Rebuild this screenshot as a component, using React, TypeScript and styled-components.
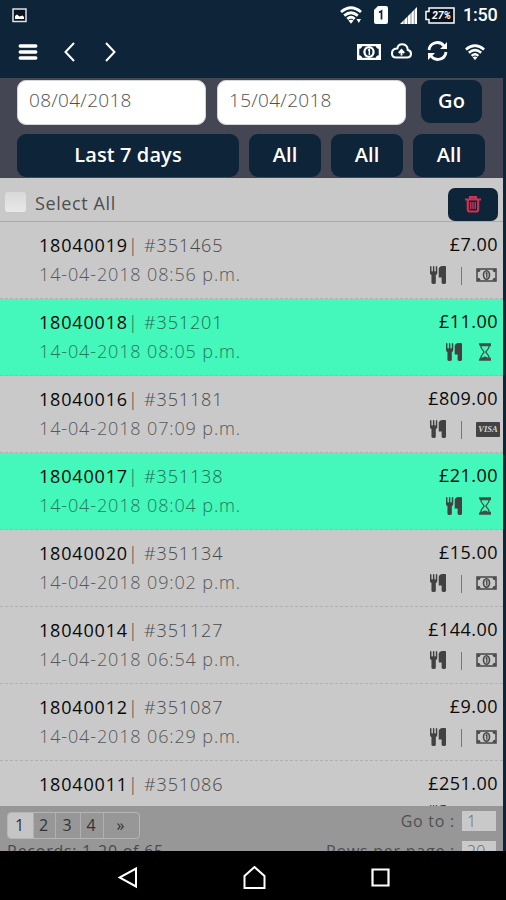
import React from "react";
import styled, { createGlobalStyle } from "styled-components";

const navy = "#0d2439";

const Global = createGlobalStyle`
  * { box-sizing: border-box; }
  html, body { margin: 0; padding: 0; background: ${navy}; }
  body { font-family: "Open Sans", "Noto Sans", sans-serif; overflow: hidden; }
  svg { display: block; flex: none; }
`;

const Screen = styled.div`
  width: 506px;
  height: 900px;
  display: flex;
  flex-direction: column;
  overflow: hidden;
  background: ${navy};
  opacity: 0.999;
`;

const StatusBar = styled.div`
  height: 30px;
  flex: none;
  display: flex;
  align-items: center;
  padding: 0 8px 0 12px;
  color: #fff;
`;

const StatusIcons = styled.div`
  margin-left: auto;
  display: flex;
  align-items: center;
`;

const StatusSet = styled.div`
  display: flex;
  align-items: center;
  gap: 12px;
  margin-right: 8px;
`;

const Clock = styled.span`
  width: 35px;
  margin-left: 8px;
  font: 500 18px/30px Roboto, sans-serif;
  letter-spacing: -0.2px;
  white-space: nowrap;
`;

const Toolbar = styled.div`
  height: 48px;
  flex: none;
  display: flex;
  align-items: flex-start;
  justify-content: space-between;
  padding: 11px 21px 0 18px;
`;

const IconGroup = styled.div<{ $gap: number }>`
  display: flex;
  align-items: center;
  height: 22px;
  gap: ${(p) => p.$gap}px;
`;

const Page = styled.div`
  flex: 1;
  min-height: 0;
  margin-right: 3px;
  display: flex;
  flex-direction: column;
  background: #c9c9c9;
`;

const Filters = styled.div`
  height: 100px;
  flex: none;
  padding: 2px 17px 0 17px;
  background: #444653;
`;

const FilterRow = styled.div<{ $gap: number }>`
  display: flex;
  align-items: flex-start;
  gap: ${(p) => p.$gap}px;
  & + & { margin-top: 9px; }
`;

const DateField = styled.div`
  width: 189px;
  height: 45px;
  padding-left: 11px;
  border: 1px solid #d4d5d9;
  border-radius: 9px;
  background: #fff;
  color: #505050;
  font-weight: 300;
  font-size: 19px;
  line-height: 39px;
  letter-spacing: 0.3px;
  & + & { margin-left: -4px; }
`;

const FilterButton = styled.div<{ $width: number }>`
  width: ${(p) => p.$width}px;
  height: 43px;
  border-radius: 9px;
  background: ${navy};
  color: #fff;
  font-weight: 600;
  font-size: 20px;
  line-height: 42px;
  letter-spacing: 0.1px;
  text-align: center;
  white-space: nowrap;
`;

const SelectBar = styled.div`
  height: 44px;
  flex: none;
  display: flex;
  align-items: flex-start;
  padding: 10px 5px 0 5px;
  border-bottom: 1px solid #aaa;
`;

const Checkbox = styled.span`
  width: 21px;
  height: 20px;
  margin-top: 4px;
  border-radius: 3px;
  background: linear-gradient(#d9d9d9, #e8e8e8);
`;

const SelectLabel = styled.span`
  margin-left: 9px;
  color: #4e4e4e;
  font-size: 18px;
  line-height: 31px;
  letter-spacing: 0.6px;
`;

const DeleteButton = styled.div`
  width: 50px;
  height: 33px;
  margin-left: auto;
  border-radius: 7px;
  background: ${navy};
  display: flex;
  align-items: center;
  justify-content: center;
`;

const List = styled.div`
  flex: 1;
  min-height: 0;
  overflow: hidden;
`;

const Row = styled.div<{ $on: boolean }>`
  height: 77px;
  padding: 8px 5px 0 39px;
  display: flex;
  justify-content: space-between;
  border-bottom: 1px dashed ${(p) => (p.$on ? "#6fcfad" : "#b0b0b0")};
  background: ${(p) => (p.$on ? "#43f8ba" : "#c9c9c9")};
`;

const Order = styled.div`
  white-space: nowrap;
`;

const OrderTitle = styled.div<{ $on: boolean }>`
  color: ${(p) => (p.$on ? "#1f6b50" : "#484848")};
  font-size: 18px;
  line-height: 30px;
  height: 30px;
  letter-spacing: 0.85px;
  font-weight: 300;
`;

const OrderId = styled.span`
  color: #080808;
  font-weight: 500;
  letter-spacing: 0.82px;
`;

const OrderDate = styled.div<{ $on: boolean }>`
  color: ${(p) => (p.$on ? "#257a5d" : "#585858")};
  font-size: 18px;
  line-height: 29px;
  letter-spacing: 0.87px;
  font-weight: 300;
`;

const Amount = styled.div`
  display: flex;
  flex-direction: column;
  align-items: flex-end;
`;

const Price = styled.div`
  color: #0a0a0a;
  font-size: 18px;
  height: 30px;
  line-height: 29px;
  letter-spacing: 0.45px;
`;

const Marks = styled.div<{ $overhang: boolean }>`
  height: 30px;
  display: flex;
  align-items: center;
  margin-right: ${(p) => (p.$overhang ? -2 : 1)}px;
`;

const Divider = styled.span`
  width: 1px;
  height: 18px;
  margin: 2px 14px 0 15px;
  background: #777;
`;

const Visa = styled.span`
  width: 24px;
  height: 15px;
  border-radius: 1px;
  background: #434343;
  color: #d5d5d5;
  font: italic bold 8.5px/15px "Liberation Serif", serif;
  text-align: center;
`;

const Footer = styled.div`
  height: 45px;
  flex: none;
  overflow: hidden;
  display: flex;
  justify-content: space-between;
  padding: 5px 7px 0 7px;
  background: #979797;
  color: #333;
  font-size: 16px;
`;

const Pager = styled.div`
  display: flex;
  width: 133px;
  height: 27px;
  margin-top: 1px;
  border: 1px solid #b5b5b5;
  border-radius: 4px;
  overflow: hidden;
`;

const PageButton = styled.span<{ $width: number; $on?: boolean }>`
  width: ${(p) => p.$width}px;
  padding-right: 2px;
  line-height: 25px;
  text-align: center;
  background: ${(p) => (p.$on ? "#c5c5c5" : "transparent")};
  & + & { border-left: 1px solid #b0b0b0; }
`;

const Records = styled.div`
  line-height: 22px;
  margin-top: 1px;
  letter-spacing: 0.75px;
  color: #4a4a4a;
  white-space: nowrap;
`;

const PageOptions = styled.div`
  display: flex;
  flex-direction: column;
  align-items: flex-end;
  gap: 10px;
`;

const Option = styled.div`
  display: flex;
  align-items: center;
  gap: 7px;
  height: 20px;
  color: #505050;
  letter-spacing: 0.75px;
  white-space: nowrap;
`;

const OptionField = styled.span`
  width: 34px;
  height: 20px;
  padding-left: 5px;
  background: #c9c9c9;
  color: #666;
  font-size: 16px;
  line-height: 20px;
  letter-spacing: 0;
  font-weight: 300;
`;

const NavBar = styled.div`
  height: 49px;
  flex: none;
  display: flex;
  align-items: center;
  justify-content: center;
  gap: 105px;
  padding: 4px 0 0 2px;
  background: #000;
`;

const Wifi = ({ w, notch }: { w: number; notch?: boolean }) => (
  <svg width={w} height={w * 0.82} viewBox="0 0 22 18" fill="none" stroke="#fff" strokeWidth="2.8">
    <path d="M1 6Q11-2.500 21 6M4.200 9.600Q11 3.800 17.800 9.600M7.300 13Q11 9.600 14.700 13" />
    <path d="M8.400 14.500L11 17.800 13.600 14.500Q11 12.800 8.400 14.500Z" fill="#fff" stroke="none" />
    {notch && <path d="M16.500 13h4.500l-2.200 4z" fill="#fff" stroke="none" />}
  </svg>
);

const Cash = ({ w = 21, h = 14, color = "#464646", bold = false }) => (
  <svg width={w} height={h} viewBox="0 0 21 14" preserveAspectRatio="none" fill="none" stroke={color}>
    <path d="M1 1h19v12H1z" strokeWidth={bold ? 2 : 1.5} />
    <path
      d="M1.500 1.500h3Q4.500 4.200 1.500 4.200zM19.500 1.500h-3Q16.500 4.200 19.500 4.200zM19.500 12.500h-3Q16.500 9.800 19.500 9.800zM1.500 12.500h3Q4.500 9.800 1.500 9.800z"
      fill={color}
      stroke="none"
    />
    <ellipse cx="10.500" cy="7" rx={bold ? 4 : 3} ry="4.200" strokeWidth={bold ? 2 : 1.6} />
    <path d="M9.600 5.500l1.200-.8v5" strokeWidth="1.300" />
  </svg>
);

const Cutlery = () => (
  <svg width="16" height="18" viewBox="192 0 1408 1792" preserveAspectRatio="none" fill="#414141">
    <path d="M832 64v640q0 61-35.500 111t-92.500 70v779q0 52-38 90t-90 38h-128q-52 0-90-38t-38-90v-779q-57-20-92.500-70t-35.500-111v-640q0-26 19-45t45-19 45 19 19 45v416q0 26 19 45t45 19 45-19 19-45v-416q0-26 19-45t45-19 45 19 19 45v416q0 26 19 45t45 19 45-19 19-45v-416q0-26 19-45t45-19 45 19 19 45zM1600 64v1600q0 52-38 90t-90 38h-128q-52 0-90-38t-38-90v-512h-224q-13 0-22.500-9.500t-9.500-22.500v-800q0-132 94-226t226-94h256q26 0 45 19t19 45z" />
  </svg>
);

const HourglassBox = styled.span`
  margin: 0 6px 0 17px;
`;

const Hourglass = () => (
  <HourglassBox>
    <svg width="12" height="18" viewBox="0 0 12 18" fill="none" stroke="#3d5149" strokeWidth="1.300">
      <path d="M.5 2.500V1h11v1.500H1M.5 15.500V17h11v-1.500H1M1.800 2.500c0 4 2.700 4.500 3.300 6.500-.6 2-3.300 2.500-3.300 6.500M10.200 2.500c0 4-2.700 4.500-3.300 6.500.6 2 3.300 2.500 3.300 6.500" />
      <path d="M2.500 15.500Q6 11.500 9.500 15.500V17h-7z" fill="#3d5149" stroke="none" />
    </svg>
  </HourglassBox>
);

type Payment = "cash" | "pending" | "visa";
const orders: { id: string; ref: string; date: string; price: string; pay: Payment }[] = [
  { id: "18040019", ref: "#351465", date: "14-04-2018 08:56 p.m.", price: "£7.00", pay: "cash" },
  { id: "18040018", ref: "#351201", date: "14-04-2018 08:05 p.m.", price: "£11.00", pay: "pending" },
  { id: "18040016", ref: "#351181", date: "14-04-2018 07:09 p.m.", price: "£809.00", pay: "visa" },
  { id: "18040017", ref: "#351138", date: "14-04-2018 08:04 p.m.", price: "£21.00", pay: "pending" },
  { id: "18040020", ref: "#351134", date: "14-04-2018 09:02 p.m.", price: "£15.00", pay: "cash" },
  { id: "18040014", ref: "#351127", date: "14-04-2018 06:54 p.m.", price: "£144.00", pay: "cash" },
  { id: "18040012", ref: "#351087", date: "14-04-2018 06:29 p.m.", price: "£9.00", pay: "cash" },
  { id: "18040011", ref: "#351086", date: "", price: "£251.00", pay: "cash" },
];

export default function App() {
  return (
    <Screen>
      <Global />
      <StatusBar>
        <svg width="15" height="15" viewBox="0 0 15 15">
          <path d="M1 1h13v12.500H1z" fill="#08131f" stroke="#dce0e8" strokeWidth="1.500" />
          <path d="M3 11V8l2-1.500 2.500 2 3-1L12 9v2z" fill="#fff" />
        </svg>
        <StatusIcons>
          <StatusSet>
            <Wifi w={22} notch />
            <svg width="14" height="18" viewBox="0 0 14 18">
              <path d="M4 0h8q2 0 2 2v14q0 2-2 2H2q-2 0-2-2V4z" fill="#fff" />
              <path d="M5 6.500L7.500 5v8.500" fill="none" stroke={navy} strokeWidth="1.700" />
            </svg>
            <svg width="17" height="17" viewBox="0 0 17 17">
              <path d="M0 17L17 0V17z" fill="#fff" />
              <path d="M4 10v7M7.500 8v9M11 4v13M14.300 2v15" stroke={navy} strokeWidth=".5" />
            </svg>
          </StatusSet>
          <svg width="30" height="17" viewBox="0 0 30 17">
            <path d="M4 1h25v15H4v-3.500H1v-8h3z" fill="#06111c" stroke="#fff" strokeWidth="1.500" />
            <text x="16.500" y="12.300" fill="#fff" textAnchor="middle" fontFamily="Roboto" fontWeight="700" fontStyle="italic" fontSize="10.500">27%</text>
          </svg>
          <Clock>1:50</Clock>
        </StatusIcons>
      </StatusBar>
      <Toolbar>
        <IconGroup $gap={26}>
          <svg width="20" height="18" viewBox="0 0 20 18" stroke="#fff" strokeWidth="3.300" strokeLinecap="round">
            <path d="M2.200 3h15.600M2.200 9h15.600M2.200 15h15.600" />
          </svg>
          <svg width="11" height="20" viewBox="0 0 11 20" fill="none" stroke="#fff" strokeWidth="2"><path d="M10 1L1.500 10 10 19" /></svg>
          <svg width="11" height="20" viewBox="0 0 11 20" fill="none" stroke="#fff" strokeWidth="2" transform="translate(4 0)"><path d="M1 1L9.500 10 1 19" /></svg>
        </IconGroup>
        <IconGroup $gap={14}>
          <Cash w={24} h={16} color="#fff" bold />
          <svg width="21" height="16" viewBox="0 0 21 16" fill="none" stroke="#fff" strokeWidth="2.100" transform="translate(-4 -1)">
            <path d="M5 14.500H16q4 0 4-3.800 0-3-3.200-3.700Q16.500 1.500 11.500 1.200 7 1 6.300 5.500 1 5.500 1 10.200q0 4.300 4 4.300z" />
            <path d="M10.500 12.500V7.500M7.800 10l2.700-3 2.700 3" strokeWidth="1.900" />
          </svg>
          <svg width="21" height="20" viewBox="0 0 21 20" fill="none" stroke="#fff" strokeWidth="2.800" transform="translate(-3 -1)">
            <path d="M2 9A8.300 8.300 0 0 1 17 5M19 11A8.300 8.300 0 0 1 4 15" />
            <path d="M20 1v7h-7zM1 19v-7h7z" fill="#fff" stroke="none" />
          </svg>
          <Wifi w={20} />
        </IconGroup>
      </Toolbar>
      <Page>
        <Filters>
          <FilterRow $gap={15}>
            <DateField>08/04/2018</DateField>
            <DateField>15/04/2018</DateField>
            <FilterButton $width={61}>Go</FilterButton>
          </FilterRow>
          <FilterRow $gap={10}>
            <FilterButton $width={222}>Last 7 days</FilterButton>
            <FilterButton $width={72}>All</FilterButton>
            <FilterButton $width={72}>All</FilterButton>
            <FilterButton $width={72}>All</FilterButton>
          </FilterRow>
        </Filters>
        <SelectBar>
          <Checkbox />
          <SelectLabel>Select All</SelectLabel>
          <DeleteButton>
            <svg width="16" height="17" viewBox="0 0 16 17" fill="none" stroke="#cf3153" strokeWidth="2.200">
              <path d="M0 3.500h16M5 3V1.200h6V3M2.800 4v9.500q0 2 2 2h6.400q2 0 2-2V4" />
              <path d="M5.800 6v7M8 6v7M10.200 6v7" strokeWidth="1.400" />
            </svg>
          </DeleteButton>
        </SelectBar>
        <List>
          {orders.map((o) => {
            const on = o.pay === "pending";
            return (
              <Row key={o.id} $on={on}>
                <Order>
                  <OrderTitle $on={on}><OrderId>{o.id}</OrderId>| {o.ref}</OrderTitle>
                  <OrderDate $on={on}>{o.date}</OrderDate>
                </Order>
                <Amount>
                  <Price>{o.price}</Price>
                  <Marks $overhang={o.pay === "visa"}>
                    <Cutlery />
                    {on ? <Hourglass /> : <Divider />}
                    {o.pay === "cash" && <Cash />}
                    {o.pay === "visa" && <Visa>VISA</Visa>}
                  </Marks>
                </Amount>
              </Row>
            );
          })}
        </List>
        <Footer>
          <div>
            <Pager>
              <PageButton $width={25} $on>1</PageButton>
              <PageButton $width={22}>2</PageButton>
              <PageButton $width={25}>3</PageButton>
              <PageButton $width={23}>4</PageButton>
              <PageButton $width={36}>»</PageButton>
            </Pager>
            <Records>Records: 1-20 of 65</Records>
          </div>
          <PageOptions>
            <Option>Go to :<OptionField>1</OptionField></Option>
            <Option>Rows per page :<OptionField>20</OptionField></Option>
          </PageOptions>
        </Footer>
      </Page>
      <NavBar>
        <svg width="20" height="22" viewBox="0 0 20 22" fill="none" stroke="#fff" strokeWidth="2"><path d="M18 1.500v18L1.500 10.500z" /></svg>
        <svg width="23" height="23" viewBox="0 0 23 23" fill="none" stroke="#fff" strokeWidth="2"><path d="M1.500 22V10L11.500 1 21.500 10V22z" /></svg>
        <svg width="19" height="19" viewBox="0 0 19 19" fill="none" stroke="#fff" strokeWidth="2.200"><path d="M1.500 1.500h16v16h-16z" /></svg>
      </NavBar>
    </Screen>
  );
}
